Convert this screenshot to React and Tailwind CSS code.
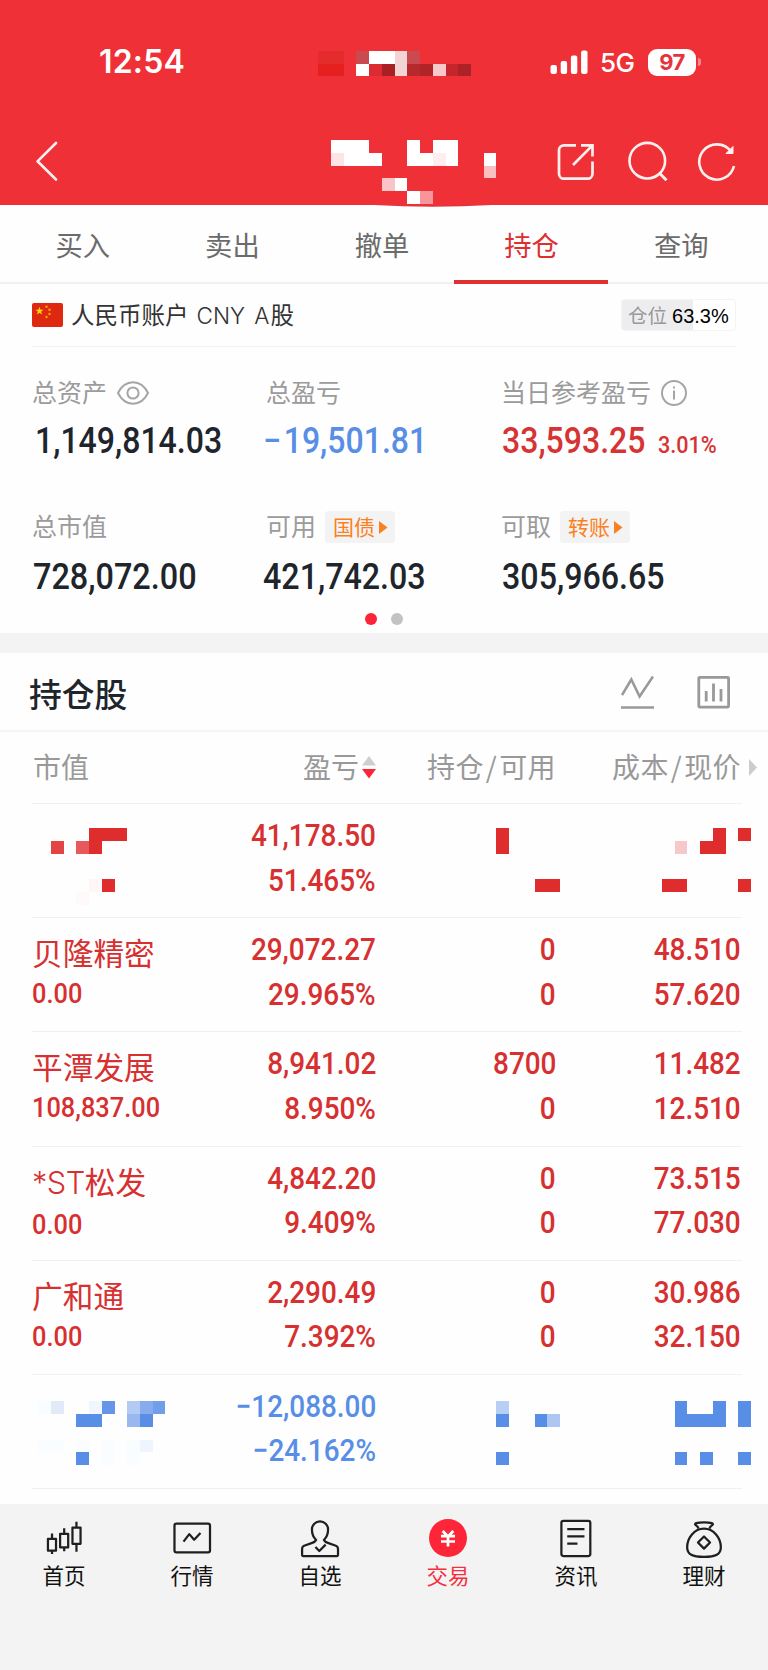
import clsx from 'clsx';

const RED = '#df2c2d';
const BLUE = '#588ee6';
const PALE = '#fafdff';

// size of one mosaic block
const CELL_W = 12.73;
const CELL_H = 12.74;

// [column, row, blocks wide, color]
const mosaic = [
  // carrier name
  [25, 4, 2, '#e52c2c'], [28, 4, 1, '#c94b50'], [29, 4, 2, '#ffffff'], [31, 4, 1, '#f3d4d4'], [32, 4, 1, '#c94b50'],
  [25, 5, 2, '#e5201f'], [28, 5, 1, '#ffffff'], [29, 5, 1, '#dc2b31'], [30, 5, 1, '#a92024'], [31, 5, 1, '#f3d4d4'],
  [32, 5, 1, '#b8292e'], [33, 5, 1, '#b02328'], [34, 5, 1, '#f9c8cb'], [35, 5, 1, '#c5252b'], [36, 5, 1, '#ac2226'],
  // account title
  [26, 11, 3, '#ffffff'], [32, 11, 1, '#ffffff'], [34, 11, 2, '#ffffff'],
  [26, 12, 1, '#fde4e7'], [27, 12, 3, '#ffffff'], [32, 12, 2, '#ffffff'], [34, 12, 1, '#feeef0'], [35, 12, 1, '#ffffff'],
  [38, 12, 1, '#ffffff'], [38, 13, 1, '#f9bfc3'],
  [30, 14, 1, '#f9c4c8'], [31, 14, 1, '#ffffff'], [32, 15, 1, '#ffffff'], [33, 15, 1, '#f6959a'],
  // first holding
  [7, 65, 3, RED], [39, 65, 1, RED], [56, 65, 1, RED], [58, 65, 1, RED],
  [4, 66, 1, '#e34344'], [6, 66, 1, '#e7595c'], [7, 66, 1, RED], [39, 66, 1, RED], [53, 66, 1, '#f7c8ca'], [55, 66, 2, RED],
  [7, 69, 1, '#fff7f7'], [8, 69, 1, RED], [42, 69, 2, RED], [52, 69, 2, RED], [58, 69, 1, RED],
  [6, 70, 1, '#fffafa'],
  // last holding
  [3, 110, 1, PALE], [4, 110, 1, '#e0eaf9'], [7, 110, 1, '#f1f6fe'], [8, 110, 1, '#6694e8'],
  [10, 110, 1, '#b3caf3'], [11, 110, 1, '#87abec'], [12, 110, 1, '#729ee9'],
  [39, 110, 1, '#b7cff4'], [53, 110, 1, BLUE], [56, 110, 1, BLUE], [58, 110, 1, BLUE],
  [6, 111, 2, BLUE], [10, 111, 1, '#9ab8ef'], [11, 111, 1, BLUE],
  [39, 111, 1, BLUE], [42, 111, 1, BLUE], [43, 111, 1, '#adc6f2'], [53, 111, 4, BLUE], [58, 111, 1, BLUE],
  [3, 113, 2, PALE], [6, 113, 1, PALE], [8, 113, 1, PALE], [10, 113, 1, PALE], [11, 113, 1, '#eff5fe'],
  [6, 114, 1, BLUE], [8, 114, 1, PALE], [10, 114, 1, PALE],
  [39, 114, 1, BLUE], [53, 114, 1, BLUE], [55, 114, 1, BLUE], [58, 114, 1, BLUE],
];

const tabs = ['买入', '卖出', '撤单', '持仓', '查询'];

const holdings = [
  { id: 1, hidden: true, profit: '41,178.50', percent: '51.465%' },
  { id: 2, name: '贝隆精密', value: '0.00', profit: '29,072.27', percent: '29.965%', held: '0', usable: '0', cost: '48.510', price: '57.620' },
  { id: 3, name: '平潭发展', value: '108,837.00', profit: '8,941.02', percent: '8.950%', held: '8700', usable: '0', cost: '11.482', price: '12.510' },
  { id: 4, name: '*ST松发', value: '0.00', profit: '4,842.20', percent: '9.409%', held: '0', usable: '0', cost: '73.515', price: '77.030' },
  { id: 5, name: '广和通', value: '0.00', profit: '2,290.49', percent: '7.392%', held: '0', usable: '0', cost: '30.986', price: '32.150' },
  { id: 6, hidden: true, loss: true, profit: '−12,088.00', percent: '−24.162%' },
];

function Mosaic() {
  return (
    <svg className="absolute inset-0 pointer-events-none" width="768" height="1670">
      <path d="M374 205Q432 208.500 492 205z" fill="#e0343a" />
      <g shapeRendering="crispEdges">
        {mosaic.map(([col, row, span, color]) => (
          <rect key={`${col}-${row}`} x={col * CELL_W} y={row * CELL_H} width={span * CELL_W} height={CELL_H} fill={color} />
        ))}
      </g>
    </svg>
  );
}

function StatusBar() {
  return (
    <div className="flex h-[124px] items-center pl-[99px] pr-[67px] font-['Inter',sans-serif] text-white">
      <div className="flex-1 text-[32px] font-semibold leading-none tracking-[0.2px]">12:54</div>
      <svg width="38" height="24" viewBox="0 0 38 24" fill="currentColor">
        <rect x="0.5" y="15" width="6.4" height="9" rx="2" />
        <rect x="10.7" y="11" width="6.4" height="13" rx="2" />
        <rect x="20.9" y="5.5" width="6.4" height="18.5" rx="2" />
        <rect x="31.1" y="0.5" width="6.4" height="23.5" rx="2" />
      </svg>
      <span className="ml-3 mt-[2px] w-[36px] text-[26px] font-medium leading-none tracking-[-0.5px]">5G</span>
      <div className="ml-3 flex h-[27px] w-[48px] items-center justify-center rounded-[9px] bg-white text-[22px] font-bold leading-none tracking-[-0.5px] text-[#e5353b]">
        97
      </div>
      <span className="ml-[2px] h-[8px] w-[3px] rounded-r-full bg-[#f5888b]" />
    </div>
  );
}

function NavBar() {
  return (
    <div className="flex h-[81px] items-start pl-[34px] pr-[30px] pt-[16px] text-white">
      <svg width="26" height="42" viewBox="0 0 26 42" fill="none" stroke="#fff0f0" strokeWidth="2.6" strokeLinecap="round" strokeLinejoin="round">
        <path d="M22 3 3.5 21.3 22 39.500" />
      </svg>
      <div className="flex-1" />
      <svg width="40" height="42" viewBox="0 0 40 42" fill="none" stroke="#fff0f0" strokeWidth="2.7">
        <path d="M20 5.3H8a5 5 0 0 0-5 5v23.400a5 5 0 0 0 5 5h23.500a5 5 0 0 0 5-5V21.500" />
        <path d="M25 5.3h11.500V16.500M36.200 5.600 17 25" />
      </svg>
      <svg className="ml-[30px]" width="42" height="42" viewBox="0 0 42 42" fill="none" stroke="#fff0f0" strokeWidth="2.6">
        <circle cx="21.3" cy="20.7" r="17.8" />
        <path d="m33.500 33.200 7 7" strokeWidth="3" />
      </svg>
      <svg className="ml-[28px]" width="42" height="42" viewBox="0 0 42 42" fill="none" stroke="#fff0f0" strokeWidth="2.6">
        <path d="M38 26A17.600 17.600 0 1 1 35 11.500" />
        <path d="M37 6.500v7h-7z" fill="#fff0f0" strokeWidth="1" />
      </svg>
    </div>
  );
}

function Tabs() {
  return (
    <div className="flex h-[79px] border-b-2 border-[#f1f1f1] pl-[8px] pr-[12px]">
      {tabs.map((tab) => (
        <div
          key={tab}
          className={clsx(
            'relative flex flex-1 items-center justify-center pt-[3px] text-[27.3px] leading-none',
            tab === '持仓' ? 'text-[#df3030]' : 'text-[#6b6b6b]'
          )}
        >
          {tab}
          {tab === '持仓' && <span className="absolute -bottom-[2px] -left-[3px] h-[4px] w-[154px] bg-[#e03030]" />}
        </div>
      ))}
    </div>
  );
}

function AccountRow() {
  return (
    <div className="mx-8 flex h-[63px] items-center border-b border-[#f3f3f3]">
      <svg width="31" height="24" viewBox="0 0 31 24">
        <rect width="31" height="24" rx="2" fill="#de2910" />
        <path d="m7.5 3.8 1 2.9h3.1L9.1 8.5l1 3-2.6-1.8L4.9 11.5l1-3L3.4 6.7h3.1z" fill="#ffde00" />
        <g fill="#f5a800">
          <circle cx="14.5" cy="3.8" r="1.2" />
          <circle cx="17.5" cy="6.8" r="1.2" />
          <circle cx="17.5" cy="11" r="1.2" />
          <circle cx="14.5" cy="14" r="1.2" />
        </g>
      </svg>
      <div className="ml-[8px] flex flex-1 items-baseline whitespace-nowrap pt-px text-[23.5px] leading-none text-[#333]">
        人民币账户
        <span className="ml-[8px] mr-[1px] font-['Inter',sans-serif] text-[22.5px] font-light [word-spacing:3px]">CNY A</span>股
      </div>
      <div className="flex h-[32px] w-[115px] items-center rounded-sm border border-[#f3f3f3] bg-linear-to-r from-[#ededef] from-63% to-white to-63% pl-[6px] leading-none">
        <span className="text-[19.5px] text-[#999]">仓位</span>
        <span className="ml-[5px] pt-px font-['Liberation_Sans',sans-serif] text-[20px] text-black">63.3%</span>
      </div>
    </div>
  );
}

function Num({ children, className }) {
  return (
    <span className={clsx("inline-block origin-left whitespace-nowrap font-['Roboto',sans-serif] font-medium leading-none", className)}>
      {children}
    </span>
  );
}

function Stat({ label, extra, children, lower }) {
  return (
    <div className="h-[134px]">
      <div className="flex h-[32px] items-center gap-[10px] text-[25px] leading-none text-[#9b9b9b]">
        <span className="mb-[3px]">{label}</span>
        {extra}
      </div>
      <div className={clsx('flex h-[38px] items-center text-[36px] text-[#20242b]', lower ? 'mt-[15px]' : 'mt-[13px]')}>
        {children}
      </div>
    </div>
  );
}

function Chip({ children }) {
  return (
    <span className="-ml-px flex h-[32px] w-[70px] items-center rounded bg-[#f3f3f3] pl-[8px] text-[21px] text-[#fa8022]">
      <span className="mb-[2px]">{children}</span>
      <svg className="ml-[4px]" width="9" height="15" viewBox="0 0 9 15" fill="currentColor">
        <path d="M0 1 8.5 7.5 0 14z" />
      </svg>
    </span>
  );
}

function Summary() {
  return (
    <div className="relative h-[286px] pl-[32px] pt-[30px]">
      <div className="grid grid-cols-[234px_235px_1fr]">
        <Stat
          label="总资产"
          extra={
            <svg width="32" height="24" viewBox="0 0 32 24" fill="none" stroke="#a5a5a5" strokeWidth="2">
              <path d="M1 12C4.500 5 10 1.300 16 1.300S27.500 5 31 12C27.500 19 22 22.700 16 22.700S4.500 19 1 12z" />
              <circle cx="16" cy="12" r="5.600" />
            </svg>
          }
        >
          <Num className="ml-[3px] scale-x-[0.89]">1,149,814.03</Num>
        </Stat>
        <Stat label="总盈亏">
          <Num className="-ml-[3px] scale-x-[0.89] text-[#588ee6]">
            <span className="mr-[3px]">−</span>19,501.81
          </Num>
        </Stat>
        <Stat
          label="当日参考盈亏"
          extra={
            <svg width="26" height="26" viewBox="0 0 26 26" fill="none" stroke="#a5a5a5" strokeWidth="2">
              <circle cx="13" cy="13" r="12" />
              <path d="M13 10.500v9M13 6.500v2" />
            </svg>
          }
        >
          <Num className="ml-px scale-x-[0.89] text-[#d63334]">33,593.25</Num>
          <Num className="-ml-[5px] mt-[7px] scale-x-90 text-[24px] text-[#d63334]">3.01%</Num>
        </Stat>
        <Stat label="总市值" lower>
          <Num className="ml-px scale-x-90">728,072.00</Num>
        </Stat>
        <Stat label="可用" lower extra={<Chip>国债</Chip>}>
          <Num className="-ml-[3px] scale-x-[0.895]">421,742.03</Num>
        </Stat>
        <Stat label="可取" lower extra={<Chip>转账</Chip>}>
          <Num className="ml-px scale-x-[0.895]">305,966.65</Num>
        </Stat>
      </div>
      <div className="absolute bottom-[8px] left-[365px] flex gap-[14px]">
        <span className="size-3 rounded-full bg-[#fd2438]" />
        <span className="size-3 rounded-full bg-[#c2c2c2]" />
      </div>
    </div>
  );
}

function HoldingsTitle() {
  return (
    <div className="flex h-[79px] items-center border-b-2 border-[#f5f5f5] pl-[29px] pr-[38px]">
      <h2 className="flex-1 pt-[3px] text-[32.8px] font-medium leading-none text-[#20242b]">持仓股</h2>
      <svg width="33" height="34" viewBox="0 0 33 34" fill="none" stroke="#999" strokeWidth="2.6">
        <path d="M1 20 10.300 4.500 18.600 21.500 32 1.500M0 32.500h33" />
      </svg>
      <svg className="ml-[43px]" width="33" height="34" viewBox="0 0 33 34" fill="none" stroke="#999" strokeWidth="2.8">
        <rect x="1.800" y="2.300" width="29.800" height="29.800" rx="1" />
        <path d="M9.200 16v10.500M16.500 8.500v18M24 14v12.500" />
      </svg>
    </div>
  );
}

const columns = 'grid grid-cols-[344px_180px_185px]';

function TableHead() {
  return (
    <div className={clsx(columns, 'relative ml-8 mr-[26px] h-[72px] items-center border-b border-[#f1f1f1] pb-[3px] text-[28px] leading-none text-[#999]')}>
      <div className="flex items-center justify-between pl-px">
        <span>市值</span>
        <span className="flex items-center">
          盈亏
          <svg className="ml-[3px] mt-[3px]" width="14" height="23" viewBox="0 0 14 23">
            <path d="M7 0 14 9.500H0z" fill="#cfcfcf" />
            <path d="M0 13h14L7 22.500z" fill="#fd2438" />
          </svg>
        </span>
      </div>
      <div className="whitespace-nowrap text-right tracking-[0.4px]">持仓<span className="px-[2px]">/</span>可用</div>
      <div className="whitespace-nowrap text-right tracking-[0.4px]">成本<span className="px-[2px]">/</span>现价</div>
      <svg className="absolute -right-[15px] top-[27px]" width="8" height="17" viewBox="0 0 8 17">
        <path d="M0 0 8 8.500 0 17z" fill="#ccc" />
      </svg>
    </div>
  );
}

function Pair({ top, bottom }) {
  return (
    <div className="flex flex-col items-end gap-[13.5px] pt-[16px] text-[31px]">
      <Num className="origin-right scale-x-90">{top}</Num>
      <Num className="origin-right scale-x-90">{bottom}</Num>
    </div>
  );
}

function HoldingRow({ item }) {
  return (
    <div
      className={clsx(
        columns,
        'ml-8 mr-[26px] h-[114.2px] border-b border-[#f1f1f1]',
        item.loss ? 'text-[#588ee6]' : 'text-[#d63031]'
      )}
    >
      <div className="flex justify-between">
        {item.hidden ? (
          <div />
        ) : (
          <div className="flex flex-col items-start gap-[13px] pt-[18px]">
            <div className="text-[30.7px] leading-[31px]">
              {item.name.startsWith('*ST') ? (
                <>
                  <span className="font-['Inter',sans-serif] font-light tracking-[-0.5px]">*ST</span>
                  {item.name.slice(3)}
                </>
              ) : (
                item.name
              )}
            </div>
            <Num className="scale-x-[0.89] text-[28.5px]">{item.value}</Num>
          </div>
        )}
        <Pair top={item.profit} bottom={item.percent} />
      </div>
      {!item.hidden && <Pair top={item.held} bottom={item.usable} />}
      {!item.hidden && <Pair top={item.cost} bottom={item.price} />}
    </div>
  );
}

const menu = [
  {
    label: '首页',
    icon: (
      <>
        <path d="M5.500 23h8.300v12H5.500zM18 17.700h8.300v14H18zM30.700 11.300H39V28h-8.300z" />
        <path d="M9.700 17.500V23M9.700 35v3.500M22.200 12v5.700M22.200 31.700v4M34.800 5.300v6M34.800 28v8" />
      </>
    ),
  },
  {
    label: '行情',
    icon: (
      <>
        <rect x="4" y="7.300" width="36.500" height="29.500" rx="2" />
        <path d="M13.300 25.700 19.200 18l5 5.800 6.500-7" />
      </>
    ),
  },
  {
    label: '自选',
    icon: (
      <>
        <path d="M18 24Q13.700 20 13.700 13.300A8.300 8.300 0 0 1 30.300 13.300Q30.300 20 26 24 27 26 30 27L38.300 30Q40.500 31 40.500 33V39.500Q40.500 40.500 39.500 40.500H4.600Q3.600 40.500 3.600 39.500V33Q3.600 31 5.700 30L14 27Q17 26 18 24Z" />
        <path d="m17.300 31.300 4 4 6.500-6.500" />
      </>
    ),
  },
  {
    label: '交易',
    active: true,
    icon: (
      <>
        <circle cx="22" cy="22" r="19.500" fill="#fd2638" stroke="none" />
        <path d="m16.500 14.800 5.500 5.700 5.500-5.700M22 20.500v10.300M14.800 20h14.400M14.800 25.600h14.400" stroke="#fff" strokeWidth="2.800" />
      </>
    ),
  },
  {
    label: '资讯',
    icon: (
      <>
        <rect x="7" y="4.300" width="29.700" height="36.200" rx="2" />
        <path d="M13 13h17.700M13 20.300h17.700M13 27.700h10.500" />
      </>
    ),
  },
  {
    label: '理财',
    icon: (
      <>
        <path d="M16.500 12.300Q15.800 10.300 13.200 8.500C12 7.200 14 6 22 6s10 1.200 8.800 2.500Q28.200 10.300 27.500 12.300" />
        <path d="M22 12.300C12 12.300 4.700 22 4.700 31.500 4.700 39 10 41.500 22 41.500S39.300 39 39.300 31.500C39.300 22 32 12.300 22 12.300Z" />
        <path d="m22 20.500 6.200 6.200-6.200 6.200-6.200-6.200z" />
      </>
    ),
  },
];

function BottomBar() {
  return (
    <div className="flex-1 bg-[#f3f3f3] pt-[12px]">
      <div className="grid grid-cols-6">
        {menu.map((item) => (
          <div key={item.label} className="flex flex-col items-center">
            <svg width="44" height="44" viewBox="-0.6 -0.6 45.200 45.200" fill="none" stroke="#1f1f1f" strokeWidth="2.300" strokeLinejoin="round">
              {item.icon}
            </svg>
            <span className={clsx('mt-[4px] text-[21.5px] leading-[22px]', item.active ? 'text-[#f52f40]' : 'text-[#111]')}>
              {item.label}
            </span>
          </div>
        ))}
      </div>
    </div>
  );
}

export default function App() {
  return (
    <div className="relative flex h-[1670px] w-[768px] flex-col overflow-hidden bg-[#fefefe] font-['Noto_Sans_CJK_SC',sans-serif]">
      <div className="bg-[#ef3036]">
        <StatusBar />
        <NavBar />
      </div>
      <Tabs />
      <AccountRow />
      <Summary />
      <div className="h-[20px] bg-[#f3f3f3]" />
      <HoldingsTitle />
      <TableHead />
      {holdings.map((item) => (
        <HoldingRow key={item.id} item={item} />
      ))}
      <div className="h-[15px]" />
      <BottomBar />
      <Mosaic />
    </div>
  );
}
